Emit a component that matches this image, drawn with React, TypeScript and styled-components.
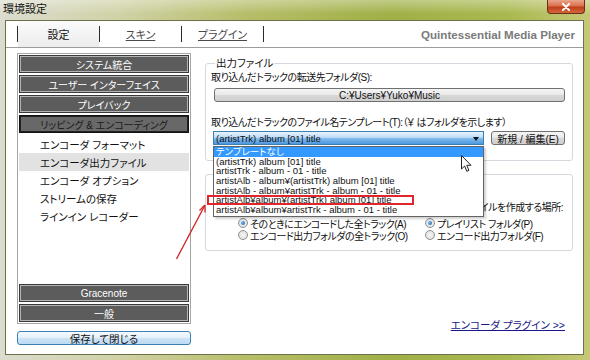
import React from 'react';
import styled, { createGlobalStyle, css } from 'styled-components';

const GlobalStyle = createGlobalStyle`
  html, body { margin: 0; padding: 0; }
  body {
    font-family: "Liberation Sans", "Noto Sans CJK JP", sans-serif;
    font-size: 10px;
    font-feature-settings: "palt";
    color: #111;
  }
`;

const Window = styled.div`
  position: relative;
  width: 590px;
  height: 360px;
  display: flex;
  flex-direction: column;
  overflow: hidden;
  background: linear-gradient(90deg, #dcdccf 0%, #d0d2a6 20%, #b6bd68 42%, #a0b046 66%, #a9b94f 86%, #c6c878 100%);
`;

const TitleBar = styled.div`
  height: 20px;
  flex-shrink: 0;
  display: flex;
  align-items: flex-start;
  justify-content: space-between;
  padding: 0 5px 0 3px;
  background: linear-gradient(180deg, rgba(255, 255, 255, 0.35), rgba(255, 255, 255, 0) 70%);
`;

const Title = styled.div`
  margin-top: 2px;
  font-size: 11px;
  line-height: 14px;
  color: #111;
`;

const CloseButton = styled.div`
  width: 38px;
  height: 14px;
  display: flex;
  align-items: center;
  justify-content: center;
  border: 1px solid #6e2d1c;
  border-top: none;
  border-radius: 0 0 4px 4px;
  box-sizing: border-box;
  background: linear-gradient(180deg, #e9a68c 0%, #d9714e 45%, #bf3f1b 55%, #d2683c 100%);
`;

const Client = styled.div`
  flex: 1;
  min-height: 0;
  margin: 0 6px 5px 5px;
  border: 1px solid #6d7048;
  background: #fff;
  display: flex;
  flex-direction: column;
`;

const TabBar = styled.div`
  height: 26px;
  flex-shrink: 0;
  display: flex;
  align-items: stretch;
  padding-left: 11px;
  border-bottom: 1px solid #9c9c9c;
`;

const TabSep = styled.div`
  width: 1px;
  height: 16px;
  align-self: center;
  background: #2a2a2a;
`;

const Tab = styled.div<{ active?: boolean }>`
  width: 81px;
  display: flex;
  align-items: center;
  justify-content: center;
  font-size: 11px;
  color: #4a4a4a;
  text-decoration: underline;
  ${({ active }) =>
    active &&
    css`
      color: #111;
      text-decoration: none;
      background: linear-gradient(180deg, #fbfbfb 0%, #ececec 100%);
    `}
`;

const Brand = styled.div`
  margin-left: auto;
  padding-right: 8px;
  display: flex;
  align-items: center;
  font-size: 11.6px;
  font-weight: bold;
  color: #7a7a7a;
`;

const Body = styled.div`
  flex: 1;
  min-height: 0;
  display: flex;
`;

const Sidebar = styled.div`
  width: 174px;
  margin-left: 11px;
  padding: 5px 0 9px;
  display: flex;
  flex-direction: column;
  gap: 7px;
`;

const Panel = styled.div`
  flex: 1;
  border: 1px solid #a5a5a5;
  padding: 1px;
  display: flex;
  flex-direction: column;
`;

const Section = styled.div<{ current?: boolean }>`
  height: 18px;
  margin-bottom: 2px;
  box-sizing: border-box;
  display: flex;
  align-items: center;
  justify-content: center;
  background: #5c5c5c;
  border: 1px solid #3a3a3a;
  box-shadow: inset 0 0 0 1px #b4b4b4;
  color: #fff;
  ${({ current }) =>
    current &&
    css`
      background: #686868;
      border: 1px solid #111;
      box-shadow: inset 0 0 0 1px #222;
      color: #1a1a1a;
    `}
  &:last-child {
    margin-bottom: 0;
  }
`;

const Item = styled.div<{ selected?: boolean }>`
  height: 18px;
  padding-left: 21px;
  display: flex;
  align-items: center;
  font-size: 10.5px;
  background: ${({ selected }) => (selected ? '#e2e2e2' : 'transparent')};
`;

const Spacer = styled.div`
  flex: 1;
`;

const Button = styled.div`
  height: 14px;
  box-sizing: border-box;
  display: flex;
  align-items: center;
  justify-content: center;
  border: 1px solid #707070;
  border-radius: 3px;
  background: linear-gradient(180deg, #f4f4f4 0%, #e9e9e9 48%, #d8d8d8 52%, #cfcfcf 100%);
  font-size: 10px;
  white-space: nowrap;
`;

const SaveButton = styled(Button)`
  border-color: #3c7fb1;
  background: linear-gradient(180deg, #f5fafe 0%, #e4f0fb 48%, #cfe4f6 52%, #bcdaf3 100%);
  font-size: 10.5px;
`;

const Main = styled.div`
  flex: 1;
  min-width: 0;
  margin: 0 10px 0 14px;
  padding: 9px 0 23px;
  display: flex;
  flex-direction: column;
`;

const Group = styled.fieldset`
  margin: 0;
  min-width: 0;
  padding: 0 7px 15px 5px;
  border: 1px solid #d3d9de;
  border-radius: 3px;
  display: flex;
  flex-direction: column;
`;

const Legend = styled.legend`
  padding: 0 1px;
  margin-left: 4px;
  line-height: 12px;
  font-size: 10.5px;
`;

const Label = styled.div<{ top: number; right?: boolean }>`
  margin-top: ${({ top }) => top}px;
  line-height: 12px;
  font-size: 10px;
  letter-spacing: -0.5px;
  white-space: nowrap;
  text-align: ${({ right }) => (right ? 'right' : 'left')};
  padding-right: ${({ right }) => (right ? 2 : 0)}px;
`;

const PathButton = styled(Button)`
  margin: 4px 0 0 3px;
`;

const ComboRow = styled.div`
  margin-top: 2px;
  height: 14px;
  display: flex;
  padding-left: 2px;
`;

const ComboWrap = styled.div`
  position: relative;
  width: 271px;
`;

const Combo = styled.div`
  height: 14px;
  box-sizing: border-box;
  display: flex;
  align-items: center;
  justify-content: space-between;
  padding: 0 4px 0 2px;
  border: 1px solid #3c7fb1;
  background: linear-gradient(180deg, #e9f4fd 0%, #bcdcf7 45%, #7fb9ec 55%, #4d98e0 100%);
  color: #111;
  font-size: 9.5px;
`;

const ComboArrow = styled.span`
  width: 0;
  height: 0;
  border-left: 3.5px solid transparent;
  border-right: 3.5px solid transparent;
  border-top: 4px solid #111;
  margin-top: 2px;
`;

const EditButton = styled(Button)`
  flex: 1;
  margin-left: 7px;
  height: 14px;
`;

const DropList = styled.div`
  position: absolute;
  top: calc(100% + 1px);
  left: 0;
  width: 271px;
  box-sizing: border-box;
  padding-bottom: 1px;
  border: 1px solid #646464;
  background: #fff;
  box-shadow: 2px 2px 2px rgba(0, 0, 0, 0.18);
  z-index: 2;
`;

const DropItem = styled.div<{ hot?: boolean }>`
  position: relative;
  height: 9.7px;
  line-height: 9.7px;
  padding-left: 2px;
  font-size: 9.5px;
  white-space: nowrap;
  ${({ hot }) =>
    hot &&
    css`
      background: #3399ff;
      color: #fff;
    `}
`;

const RedMark = styled.span`
  position: absolute;
  left: -7px;
  top: 0;
  width: 207px;
  height: 10px;
  box-sizing: border-box;
  border: 2px solid #e0262a;
`;

const Group2 = styled.div`
  margin-top: 13px;
  padding: 0 7px 9px 5px;
  border: 1px solid #d3d9de;
  border-radius: 3px;
  display: flex;
  flex-direction: column;
`;

const RadioGrid = styled.div`
  margin-top: 3px;
  padding-left: 27px;
  display: grid;
  grid-template-columns: 187px 1fr;
`;

const RadioRow = styled.div`
  height: 12px;
  display: flex;
  align-items: center;
  gap: 2px;
  font-size: 10px;
  letter-spacing: -0.5px;
  white-space: nowrap;
`;

const Radio = styled.span<{ checked?: boolean }>`
  width: 10px;
  height: 10px;
  flex-shrink: 0;
  box-sizing: border-box;
  border-radius: 50%;
  border: 1px solid #8e8f8f;
  background: radial-gradient(circle at 50% 50%, #f4f4f4 0%, #dcdcdc 100%);
  display: flex;
  align-items: center;
  justify-content: center;
  &::after {
    content: '';
    width: 4px;
    height: 4px;
    border-radius: 50%;
    background: ${({ checked }) => (checked ? 'radial-gradient(circle at 35% 35%, #6fb8f0, #1c5f9b)' : 'transparent')};
  }
`;

const LinkRow = styled.div`
  display: flex;
  justify-content: flex-end;
  padding-right: 8px;
`;

const Link = styled.span`
  line-height: 12px;
  font-size: 10.5px;
  color: #17178a;
  text-decoration: underline;
`;

const Overlay = styled.svg`
  position: absolute;
  left: 0;
  top: 0;
  pointer-events: none;
  z-index: 3;
`;

const Cursor = styled.svg`
  position: absolute;
  left: 461px;
  top: 155px;
  z-index: 4;
`;

const templates = [
  'テンプレートなし',
  '(artistTrk) album [01] title',
  'artistTrk - album - 01 - title',
  'artistAlb - album¥(artistTrk) album [01] title',
  'artistAlb - album¥artistTrk - album - 01 - title',
  'artistAlb¥album¥(artistTrk) album [01] title',
  'artistAlb¥album¥artistTrk - album - 01 - title',
];

export default function App() {
  return (
    <>
      <GlobalStyle />
      <Window>
        <TitleBar>
          <Title>環境設定</Title>
          <CloseButton>
            <svg width="10" height="8" viewBox="0 0 10 8">
              <path d="M2 1 L8 7 M8 1 L2 7" stroke="#fff" strokeWidth="2" strokeLinecap="round" />
            </svg>
          </CloseButton>
        </TitleBar>
        <Client>
          <TabBar>
            <TabSep />
            <Tab active>設定</Tab>
            <TabSep />
            <Tab>スキン</Tab>
            <TabSep />
            <Tab>プラグイン</Tab>
            <TabSep />
            <Brand>Quintessential Media Player</Brand>
          </TabBar>
          <Body>
            <Sidebar>
              <Panel>
                <Section>システム統合</Section>
                <Section>ユーザー インターフェイス</Section>
                <Section>プレイバック</Section>
                <Section current>リッピング &amp; エンコーディング</Section>
                <Item>エンコーダ フォーマット</Item>
                <Item selected>エンコーダ出力ファイル</Item>
                <Item>エンコーダ オプション</Item>
                <Item>ストリームの保存</Item>
                <Item>ラインイン レコーダー</Item>
                <Spacer />
                <Section>Gracenote</Section>
                <Section>一般</Section>
              </Panel>
              <SaveButton>保存して閉じる</SaveButton>
            </Sidebar>
            <Main>
              <Group>
                <Legend>出力ファイル</Legend>
                <Label top={3}>取り込んだトラックの転送先フォルダ(S):</Label>
                <PathButton>C:¥Users¥Yuko¥Music</PathButton>
                <Label top={15}>取り込んだトラックのファイル名テンプレート(T):（￥ はフォルダを示します）</Label>
                <ComboRow>
                  <ComboWrap>
                    <Combo>
                      <span>(artistTrk) album [01] title</span>
                      <ComboArrow />
                    </Combo>
                    <DropList>
                      {templates.map((t, i) => (
                        <DropItem key={i} hot={i === 0}>
                          {i === 5 && <RedMark />}
                          {t}
                        </DropItem>
                      ))}
                    </DropList>
                  </ComboWrap>
                  <EditButton>新規 / 編集(E)</EditButton>
                </ComboRow>
              </Group>
              <Group2>
                <Label top={27} right>ファイルを作成する場所:</Label>
                <RadioGrid>
                  <RadioRow>
                    <Radio checked />
                    そのときにエンコードした全トラック(A)
                  </RadioRow>
                  <RadioRow>
                    <Radio checked />
                    プレイリスト フォルダ(P)
                  </RadioRow>
                  <RadioRow>
                    <Radio />
                    エンコード出力フォルダの全トラック(O)
                  </RadioRow>
                  <RadioRow>
                    <Radio />
                    エンコード出力フォルダ(F)
                  </RadioRow>
                </RadioGrid>
              </Group2>
              <Spacer />
              <LinkRow>
                <Link>エンコーダ プラグイン &gt;&gt;</Link>
              </LinkRow>
            </Main>
          </Body>
        </Client>
        <Overlay width="590" height="360" viewBox="0 0 590 360">
          <line x1="176.5" y1="259" x2="204" y2="207" stroke="#d42020" strokeWidth="1.3" />
          <path d="M205 205 L199.5 210.5 M205 205 L205 212.5" stroke="#d42020" strokeWidth="1.3" fill="none" />
        </Overlay>
        <Cursor width="12" height="18" viewBox="0 0 12 18">
          <path
            d="M0.5 0.5 L0.5 14 L3.6 11 L5.8 16.3 L7.9 15.4 L5.8 10.3 L10 10.3 Z"
            fill="#fff"
            stroke="#222"
            strokeWidth="1"
            strokeLinejoin="round"
          />
        </Cursor>
      </Window>
    </>
  );
}
